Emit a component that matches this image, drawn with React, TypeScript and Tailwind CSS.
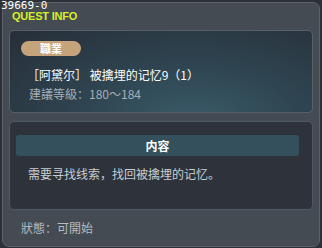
export default function App() {
  return (
    <div
      className="relative w-[322px] h-[248px] bg-[#2c3137] overflow-hidden"
      style={{ fontFamily: '"Noto Sans CJK SC", "Noto Sans", sans-serif' }}
    >
      <div className="absolute inset-x-[2px] top-[2px] bottom-[1px] rounded-[7px] border border-[#5b6269] bg-[#454b52]" />
      <div className="relative flex flex-col h-full">
        <div className="h-[30px] pl-[1px]">
          <div
            className="text-[11px] leading-[11px] text-white"
            style={{ fontFamily: '"DejaVu Sans Mono", monospace' }}
          >
            39669-0
          </div>
          <div
            className="ml-[11px] text-[11px] leading-[11px] font-bold text-[#d7ef2a] tracking-[-0.2px]"
            style={{ fontFamily: '"Liberation Sans", Arial, sans-serif' }}
          >
            QUEST INFO
          </div>
        </div>

        <div className="mx-[9px] h-[83px] rounded-[5px] border border-[#56606a] bg-[radial-gradient(ellipse_at_60%_110%,#3a5a68_0%,#2e4450_45%,#272e38_100%)] px-[11px] pt-[10px]">
          <div className="flex h-[15px] w-[60px] items-center justify-center rounded-full bg-[#c6a47b] text-[11px] font-bold text-white">
            職業
          </div>
          <div className="mt-[12px] pl-[6px] text-[12px] leading-[14px] text-white">
            ［阿黛尔］ 被擒埋的记忆9（1）
          </div>
          <div className="mt-[5px] pl-[8px] text-[12px] leading-[14px] text-[#a3aeb7]">
            建議等級：180～184
          </div>
        </div>

        <div className="mx-[9px] mt-[8px] h-[89px] rounded-[5px] border border-[#4f5962] bg-[#2e333b] px-[6px] pt-[13px]">
          <div className="flex h-[21px] w-[283px] items-center justify-center rounded-[3px] bg-[#34505d] text-[12px] font-bold text-white">
            内容
          </div>
          <div className="mt-[11px] pl-[12px] text-[12px] leading-[14px] text-[#c6cdd3]">
            需要寻找线索，找回被擒埋的记忆。
          </div>
        </div>

        <div className="mt-[11px] pl-[21px] text-[12px] leading-[14px] text-[#b4bcc3]">
          狀態：可開始
        </div>
      </div>
    </div>
  );
}
